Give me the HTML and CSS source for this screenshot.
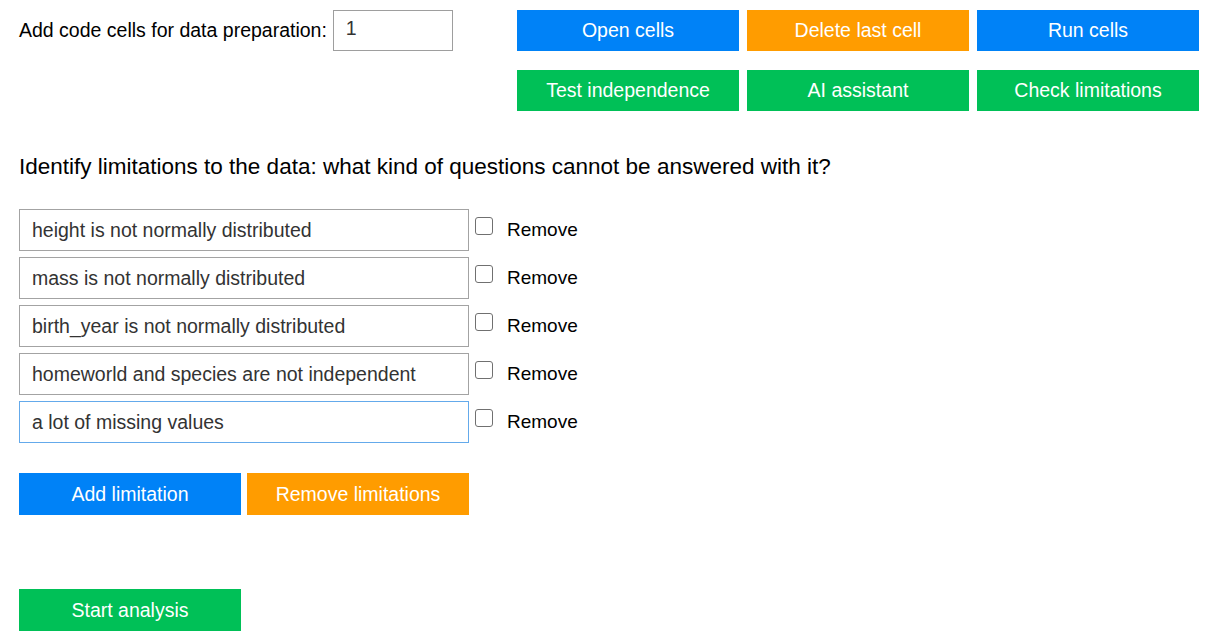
FILE: index.html
```html
<!DOCTYPE html>
<html>
<head>
<meta charset="utf-8">
<link rel="stylesheet" href="styles.css">
</head>
<body>
<div class="page">
  <div class="top">
    <div class="cells">
      <label class="cells-label">Add code cells for data preparation:</label>
      <input class="num" type="text" value="1">
    </div>
    <div class="actions">
      <button class="btn blue">Open cells</button>
      <button class="btn orange">Delete last cell</button>
      <button class="btn blue">Run cells</button>
      <button class="btn green">Test independence</button>
      <button class="btn green">AI assistant</button>
      <button class="btn green">Check limitations</button>
    </div>
  </div>

  <h2 class="question">Identify limitations to the data: what kind of questions cannot be answered with it?</h2>

  <div class="limits">
    <div class="limit"><input class="text" type="text" value="height is not normally distributed"><label class="rm"><span class="box"></span>Remove</label></div>
    <div class="limit"><input class="text" type="text" value="mass is not normally distributed"><label class="rm"><span class="box"></span>Remove</label></div>
    <div class="limit"><input class="text" type="text" value="birth_year is not normally distributed"><label class="rm"><span class="box"></span>Remove</label></div>
    <div class="limit"><input class="text" type="text" value="homeworld and species are not independent"><label class="rm"><span class="box"></span>Remove</label></div>
    <div class="limit"><input class="text focused" type="text" value="a lot of missing values"><label class="rm"><span class="box"></span>Remove</label></div>
  </div>

  <div class="limit-actions">
    <button class="btn blue">Add limitation</button>
    <button class="btn orange">Remove limitations</button>
  </div>

  <div class="start">
    <button class="btn green">Start analysis</button>
  </div>
</div>
</body>
</html>
```

FILE: styles.css
```css
* { box-sizing: border-box; }
body {
  margin: 0;
  font-family: "Liberation Sans", Arial, sans-serif;
  color: #000;
  background: #fff;
}
.page {
  padding: 10px 24px 0 19px;
}
.top {
  display: flex;
  align-items: flex-start;
}
.cells {
  width: 498px;
  display: flex;
  align-items: center;
  height: 41px;
}
.cells-label {
  font-size: 19.5px;
  margin-right: 6px;
}
.num {
  width: 120px;
  height: 41px;
  border: 1px solid #9e9e9e;
  padding: 0 12px 5px;
  font: 19.5px "Liberation Sans", Arial, sans-serif;
  color: #333;
  outline: none;
}
.actions {
  display: grid;
  grid-template-columns: repeat(3, 222px);
  column-gap: 8px;
  row-gap: 19px;
}
.btn {
  height: 41px;
  width: 222px;
  border: none;
  color: #fff;
  font: 19.5px "Liberation Sans", Arial, sans-serif;
  padding: 0;
  margin: 0;
}
.blue { background: #0082f7; }
.orange { background: #ff9c00; }
.green { background: #00c057; }

.question {
  margin: 43px 0 0;
  font-size: 22.5px;
  font-weight: normal;
  line-height: 26px;
}
.limits {
  margin-top: 29px;
  display: flex;
  flex-direction: column;
  gap: 6px;
}
.limit {
  display: flex;
  align-items: center;
  height: 42px;
}
.text {
  width: 450px;
  height: 42px;
  border: 1px solid #a3a3a3;
  padding: 0 12px;
  font: 19.5px "Liberation Sans", Arial, sans-serif;
  color: #333;
  outline: none;
}
.text.focused { border-color: #64aaeb; }
.rm {
  display: flex;
  align-items: center;
  font-size: 19px;
  margin-left: 6px;
}
.box {
  width: 18px;
  height: 18px;
  border: 1.5px solid #707070;
  border-radius: 3px;
  margin-right: 14px;
  margin-bottom: 8px;
}
.limit-actions {
  margin-top: 30px;
  display: flex;
  gap: 6px;
}
.limit-actions .btn { height: 42px; }
.start {
  margin-top: 74px;
}
.start .btn { height: 42px; }
```
